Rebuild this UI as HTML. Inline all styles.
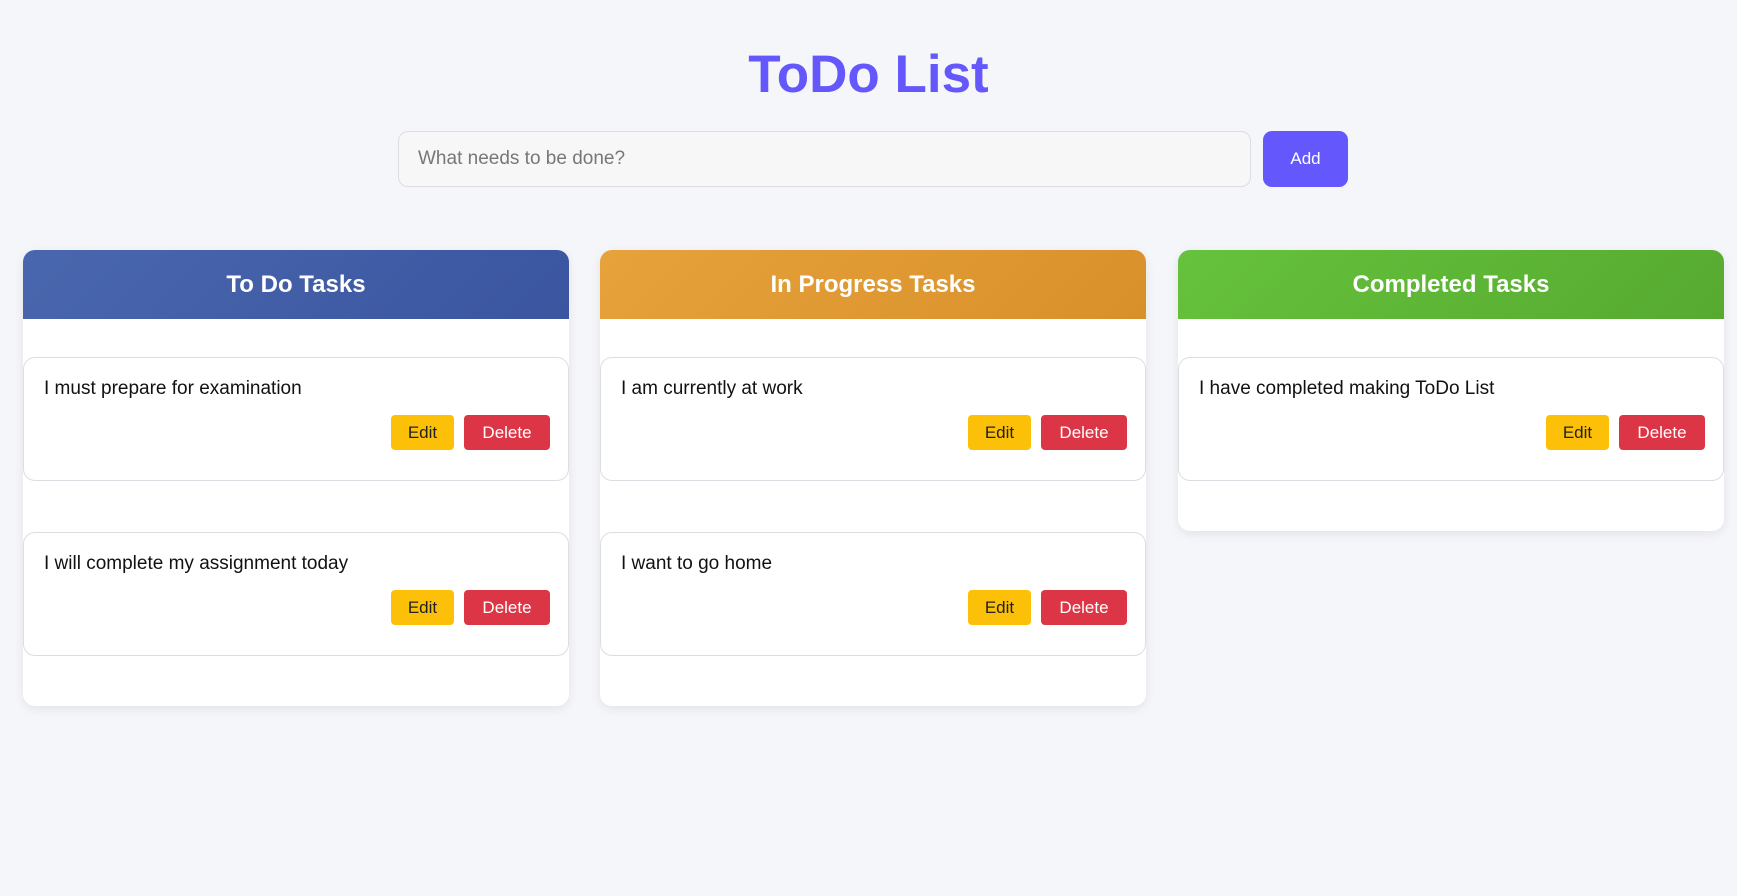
<!DOCTYPE html>
<html><head><meta charset="utf-8">
<style>
*{box-sizing:border-box;margin:0;padding:0}
body{width:1737px;height:896px;background:#f5f6fa;font-family:"Liberation Sans",sans-serif;position:relative;overflow:hidden}
h1{position:absolute;top:44px;left:0;width:1737px;text-align:center;font-size:53px;font-weight:bold;color:#6457fb;letter-spacing:0}
.inp{position:absolute;left:398px;top:131px;width:853px;height:56px;background:#f7f7f8;border:1px solid #dcdde2;border-radius:10px;font-size:19px;color:#777;padding-left:19px;line-height:54px}
.add{position:absolute;left:1263px;top:131px;width:85px;height:56px;background:#6457fb;border-radius:9px;color:#fff;font-size:17px;text-align:center;line-height:56px}
.col{position:absolute;top:250px;width:546px;background:#fff;border-radius:12px;box-shadow:0 3px 10px rgba(0,0,0,0.08);overflow:hidden}
.hd{height:69px;color:#fff;font-weight:bold;font-size:24px;text-align:center;line-height:69px}
.body{padding-top:38px}
.card{height:124px;border:1px solid #dcdde2;border-radius:12px;margin-bottom:51px;position:relative;background:#fff}
.card p{position:absolute;left:20px;top:20px;font-size:19px;color:#111}
.b{position:absolute;top:57px;height:35px;border-radius:4px;font-size:17px;text-align:center;line-height:35px}
.e{right:114px;width:63px;background:#fdc008;color:#222}
.d{right:18px;width:86px;background:#dc3545;color:#fff}
</style></head><body>
<h1>ToDo List</h1>
<div class="inp">What needs to be done?</div>
<div class="add">Add</div>

<div class="col" style="left:23px;height:456px">
<div class="hd" style="background:linear-gradient(135deg,#4967ae,#3b55a0)">To Do Tasks</div>
<div class="body">
<div class="card"><p>I must prepare for examination</p><div class="b e">Edit</div><div class="b d">Delete</div></div>
<div class="card"><p>I will complete my assignment today</p><div class="b e">Edit</div><div class="b d">Delete</div></div>
</div></div>

<div class="col" style="left:600px;height:456px">
<div class="hd" style="background:linear-gradient(135deg,#e7a23c,#d8902a)">In Progress Tasks</div>
<div class="body">
<div class="card"><p>I am currently at work</p><div class="b e">Edit</div><div class="b d">Delete</div></div>
<div class="card"><p>I want to go home</p><div class="b e">Edit</div><div class="b d">Delete</div></div>
</div></div>

<div class="col" style="left:1178px;height:281px">
<div class="hd" style="background:linear-gradient(135deg,#66c23c,#56aa30)">Completed Tasks</div>
<div class="body">
<div class="card"><p>I have completed making ToDo List</p><div class="b e">Edit</div><div class="b d">Delete</div></div>
</div></div>
</body></html>
